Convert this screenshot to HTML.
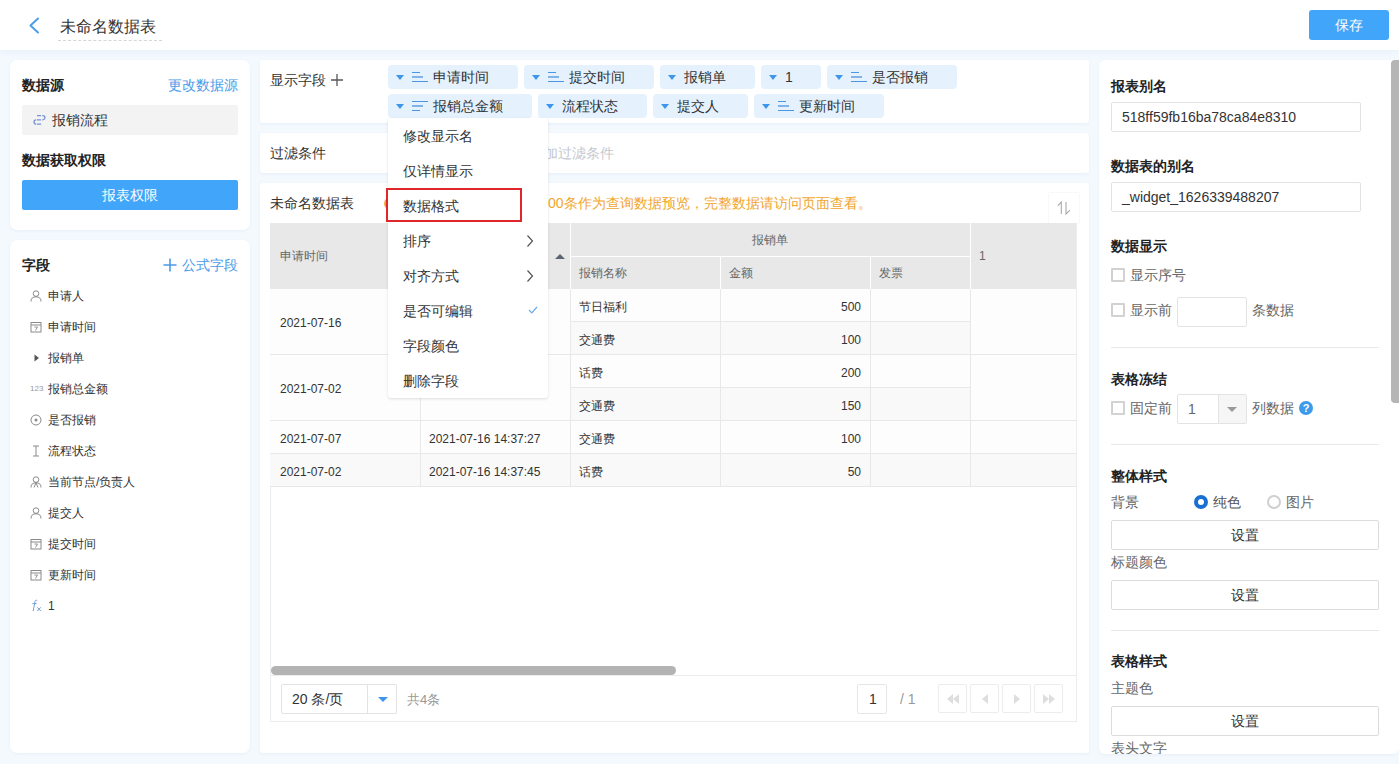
<!DOCTYPE html><html><head><meta charset="utf-8"><style>
*{box-sizing:border-box;margin:0;padding:0}
html,body{width:1399px;height:764px;overflow:hidden}
body{font-family:"Liberation Sans",sans-serif;background:#f4f9fe;color:#333;font-size:14px;position:relative}
.abs{position:absolute}
.card{position:absolute;background:#fff;box-shadow:0 1px 3px rgba(205,220,238,.35)}
.t{position:absolute;white-space:nowrap;line-height:1}
.b{font-weight:bold;color:#222}
.blue{color:#4a9be8}
.tag{position:absolute;height:24px;background:#e5f2fe;border-radius:4px}
.tri{position:absolute;width:0;height:0;border-left:4px solid transparent;border-right:4px solid transparent;border-top:5px solid #3d96ec}
.cell{position:absolute;font-size:12px;line-height:1;white-space:nowrap;color:#333}
.mi{position:absolute;left:403px;font-size:14px;color:#333;line-height:1;white-space:nowrap}
.inp{position:absolute;border:1px solid #e3e3e3;border-radius:2px;background:#fff}
.cb{position:absolute;left:1111px;width:14px;height:14px;border:2px solid #d2d2d2;border-radius:1px;background:#fff}
.btn{position:absolute;left:1111px;width:268px;height:30px;border:1px solid #dcdcdc;border-radius:2px;background:#fff;text-align:center;line-height:28px;font-size:14px;color:#333}
.fi{position:absolute;left:48px;font-size:12px;line-height:1;color:#333;white-space:nowrap}
.pb{position:absolute;top:684px;width:29px;height:29px;border:1px solid #ececec;border-radius:2px;background:#fff}
</style></head><body>
<div class="abs" style="left:0;top:0;width:1399px;height:50px;background:#fff;box-shadow:0 2px 6px rgba(210,225,242,.35)"></div>
<svg class="abs" style="left:26px;top:15px" width="16" height="20" viewBox="0 0 16 20"><path d="M12 3.5 L4.5 10.5 L12 17.5" fill="none" stroke="#4a9ee8" stroke-width="2" stroke-linecap="round" stroke-linejoin="round"/></svg>
<div class="t" style="left:60px;top:19px;font-size:16px;color:#333">未命名数据表</div>
<div class="abs" style="left:58px;top:40px;width:104px;border-top:1px dashed #d6d6d6"></div>
<div class="abs" style="left:1309px;top:10px;width:80px;height:30px;background:#41a6fa;border-radius:3px;color:#fff;font-size:14px;text-align:center;line-height:30px">保存</div>
<div class="card" style="left:10px;top:60px;width:240px;height:170px;border-radius:7px"></div>
<div class="t b" style="left:22px;top:78px;font-size:14px">数据源</div>
<div class="t blue" style="left:168px;top:78px;font-size:14px">更改数据源</div>
<div class="abs" style="left:22px;top:105px;width:216px;height:30px;background:#f3f3f3;border-radius:2px"></div>
<svg class="abs" style="left:33px;top:113px" width="13" height="13" viewBox="0 0 13 13"><path d="M4 2.5H8M4 6.8H8M4 11.2H8M9.2 2.5H9.8A2.15 2.15 0 0 1 9.8 6.8H9.2M3.2 6.8A2.2 2.2 0 0 0 3.2 11.2" fill="none" stroke="#7393d6" stroke-width="1.25"/></svg>
<div class="t" style="left:52px;top:113px;font-size:14px;color:#333">报销流程</div>
<div class="t b" style="left:22px;top:153px;font-size:14px">数据获取权限</div>
<div class="abs" style="left:22px;top:180px;width:216px;height:30px;background:#41a6fa;border-radius:2px;color:#fff;text-align:center;line-height:30px;font-size:14px">报表权限</div>
<div class="card" style="left:10px;top:240px;width:240px;height:513px;border-radius:7px"></div>
<div class="t b" style="left:22px;top:258px;font-size:14px">字段</div>
<svg class="abs" style="left:163px;top:258px" width="14" height="14" viewBox="0 0 14 14"><path d="M7 0.5V13.5M0.5 7H13.5" stroke="#4a9be8" stroke-width="1.6"/></svg>
<div class="t blue" style="left:182px;top:258px;font-size:14px">公式字段</div>
<div class="fi" style="top:290px">申请人</div>
<svg class="abs" style="left:30px;top:290px" width="12" height="12" viewBox="0 0 12 12"><circle cx="6" cy="3.6" r="2.8" fill="none" stroke="#8a8a8a" stroke-width="1"/><path d="M1 11.5 C1 8 3 6.8 6 6.8 C9 6.8 11 8 11 11.5" fill="none" stroke="#8a8a8a" stroke-width="1"/></svg>
<div class="fi" style="top:321px">申请时间</div>
<svg class="abs" style="left:30px;top:321px" width="12" height="12" viewBox="0 0 12 12"><rect x="1" y="1.5" width="10" height="9.5" fill="none" stroke="#8a8a8a" stroke-width="1"/><path d="M1 4H11" stroke="#8a8a8a" stroke-width="1"/><path d="M4.5 6H7.5L5.5 9.5" fill="none" stroke="#8a8a8a" stroke-width="0.9"/></svg>
<div class="fi" style="top:352px">报销单</div>
<svg class="abs" style="left:34px;top:354px" width="6" height="8" viewBox="0 0 6 8"><path d="M0.5 0.5L5 4L0.5 7.5Z" fill="#555"/></svg>
<div class="fi" style="top:383px">报销总金额</div>
<div class="t" style="left:30px;top:385px;font-size:8px;color:#999;letter-spacing:0">123</div>
<div class="fi" style="top:414px">是否报销</div>
<svg class="abs" style="left:30px;top:414px" width="12" height="12" viewBox="0 0 12 12"><circle cx="6" cy="6" r="5" fill="none" stroke="#8a8a8a" stroke-width="1"/><circle cx="6" cy="6" r="1.5" fill="#8a8a8a"/></svg>
<div class="fi" style="top:445px">流程状态</div>
<svg class="abs" style="left:31px;top:445px" width="10" height="12" viewBox="0 0 10 12"><path d="M2 1H8M5 1V11M2 11H8" fill="none" stroke="#8a8a8a" stroke-width="1"/></svg>
<div class="fi" style="top:476px">当前节点/负责人</div>
<svg class="abs" style="left:30px;top:476px" width="12" height="12" viewBox="0 0 12 12"><circle cx="6" cy="3.6" r="2.8" fill="none" stroke="#8a8a8a" stroke-width="1"/><path d="M1 11.5 C1 8 3 6.8 6 6.8 C9 6.8 11 8 11 11.5 M6 6.8 L4 11.5 M6 6.8 L8 11.5" fill="none" stroke="#8a8a8a" stroke-width="1"/></svg>
<div class="fi" style="top:507px">提交人</div>
<svg class="abs" style="left:30px;top:507px" width="12" height="12" viewBox="0 0 12 12"><circle cx="6" cy="3.6" r="2.8" fill="none" stroke="#8a8a8a" stroke-width="1"/><path d="M1 11.5 C1 8 3 6.8 6 6.8 C9 6.8 11 8 11 11.5" fill="none" stroke="#8a8a8a" stroke-width="1"/></svg>
<div class="fi" style="top:538px">提交时间</div>
<svg class="abs" style="left:30px;top:538px" width="12" height="12" viewBox="0 0 12 12"><rect x="1" y="1.5" width="10" height="9.5" fill="none" stroke="#8a8a8a" stroke-width="1"/><path d="M1 4H11" stroke="#8a8a8a" stroke-width="1"/><path d="M4.5 6H7.5L5.5 9.5" fill="none" stroke="#8a8a8a" stroke-width="0.9"/></svg>
<div class="fi" style="top:569px">更新时间</div>
<svg class="abs" style="left:30px;top:569px" width="12" height="12" viewBox="0 0 12 12"><rect x="1" y="1.5" width="10" height="9.5" fill="none" stroke="#8a8a8a" stroke-width="1"/><path d="M1 4H11" stroke="#8a8a8a" stroke-width="1"/><path d="M4.5 6H7.5L5.5 9.5" fill="none" stroke="#8a8a8a" stroke-width="0.9"/></svg>
<div class="fi" style="top:600px">1</div>
<svg class="abs" style="left:31px;top:599px" width="11" height="13" viewBox="0 0 11 13"><path d="M6.3 1.6 C5.6 0.9 4.4 1 4 2.4 L2.2 12 M1.4 4.6 H5.6" fill="none" stroke="#6d9fdc" stroke-width="1"/><path d="M6.3 8.3 L9.8 12 M9.8 8.3 L6.3 12" fill="none" stroke="#6d9fdc" stroke-width="1"/></svg>
<div class="card" style="left:260px;top:60px;width:829px;height:63px;border-radius:3px"></div>
<div class="t" style="left:270px;top:73px;font-size:14px;color:#333">显示字段</div>
<svg class="abs" style="left:331px;top:74px" width="12" height="12" viewBox="0 0 12 12"><path d="M6 0V12M0 6H12" stroke="#555" stroke-width="1.3"/></svg>
<div class="tag" style="left:388px;top:65px;width:130px"></div>
<div class="tri" style="left:396px;top:75px"></div>
<div class="abs" style="left:412px;top:72px;width:8px;height:1px;background:#4c97e4"></div>
<div class="abs" style="left:412px;top:76px;width:11px;height:2px;background:#7fb3ea"></div>
<div class="abs" style="left:412px;top:81px;width:16px;height:1px;background:#4c97e4"></div>
<div class="t" style="left:433px;top:70px;font-size:14px;color:#333">申请时间</div>
<div class="tag" style="left:524px;top:65px;width:130px"></div>
<div class="tri" style="left:532px;top:75px"></div>
<div class="abs" style="left:548px;top:72px;width:8px;height:1px;background:#4c97e4"></div>
<div class="abs" style="left:548px;top:76px;width:11px;height:2px;background:#7fb3ea"></div>
<div class="abs" style="left:548px;top:81px;width:16px;height:1px;background:#4c97e4"></div>
<div class="t" style="left:569px;top:70px;font-size:14px;color:#333">提交时间</div>
<div class="tag" style="left:660px;top:65px;width:95px"></div>
<div class="tri" style="left:668px;top:75px"></div>
<div class="t" style="left:684px;top:70px;font-size:14px;color:#333">报销单</div>
<div class="tag" style="left:761px;top:65px;width:60px"></div>
<div class="tri" style="left:769px;top:75px"></div>
<div class="t" style="left:785px;top:70px;font-size:14px;color:#333">1</div>
<div class="tag" style="left:827px;top:65px;width:130px"></div>
<div class="tri" style="left:835px;top:75px"></div>
<div class="abs" style="left:851px;top:72px;width:8px;height:1px;background:#4c97e4"></div>
<div class="abs" style="left:851px;top:76px;width:11px;height:2px;background:#7fb3ea"></div>
<div class="abs" style="left:851px;top:81px;width:16px;height:1px;background:#4c97e4"></div>
<div class="t" style="left:872px;top:70px;font-size:14px;color:#333">是否报销</div>
<div class="tag" style="left:388px;top:94px;width:144px"></div>
<div class="tri" style="left:396px;top:104px"></div>
<div class="abs" style="left:412px;top:101px;width:16px;height:1px;background:#4c97e4"></div>
<div class="abs" style="left:412px;top:105px;width:11px;height:2px;background:#7fb3ea"></div>
<div class="abs" style="left:412px;top:110px;width:8px;height:1px;background:#4c97e4"></div>
<div class="t" style="left:433px;top:99px;font-size:14px;color:#333">报销总金额</div>
<div class="tag" style="left:538px;top:94px;width:109px"></div>
<div class="tri" style="left:546px;top:104px"></div>
<div class="t" style="left:562px;top:99px;font-size:14px;color:#333">流程状态</div>
<div class="tag" style="left:653px;top:94px;width:95px"></div>
<div class="tri" style="left:661px;top:104px"></div>
<div class="t" style="left:677px;top:99px;font-size:14px;color:#333">提交人</div>
<div class="tag" style="left:754px;top:94px;width:130px"></div>
<div class="tri" style="left:762px;top:104px"></div>
<div class="abs" style="left:778px;top:101px;width:8px;height:1px;background:#4c97e4"></div>
<div class="abs" style="left:778px;top:105px;width:11px;height:2px;background:#7fb3ea"></div>
<div class="abs" style="left:778px;top:110px;width:16px;height:1px;background:#4c97e4"></div>
<div class="t" style="left:799px;top:99px;font-size:14px;color:#333">更新时间</div>
<div class="card" style="left:260px;top:133px;width:829px;height:40px;border-radius:3px"></div>
<div class="t" style="left:270px;top:146px;font-size:14px;color:#333">过滤条件</div>
<div class="t" style="left:530px;top:146px;font-size:14px;color:#c4c8cf">添加过滤条件</div>
<div class="card" style="left:260px;top:183px;width:829px;height:570px;border-radius:3px"></div>
<div class="t" style="left:270px;top:196px;font-size:14px;color:#333">未命名数据表</div>
<div class="abs" style="left:384px;top:197px;width:13px;height:13px;border-radius:50%;background:#f2a52e"></div>
<div class="t" style="left:548px;top:196px;font-size:14px;color:#f2a52e">00条作为查询数据预览，完整数据请访问页面查看。</div>
<div class="abs" style="left:1049px;top:193px;width:30px;height:30px;background:#fff;box-shadow:0 0 2px rgba(0,0,0,.09);border-radius:0"></div>
<svg class="abs" style="left:1056px;top:201px" width="16" height="14" viewBox="0 0 16 14"><path d="M5.3 13V1L1.8 4.6M10 1V13L14 9.2" fill="none" stroke="#aaa" stroke-width="1.1"/></svg>
<div class="abs" style="left:270px;top:223px;width:807px;height:499px;border:1px solid #ececec;border-top:none"></div>
<div class="abs" style="left:270px;top:223px;width:806px;height:66px;background:#e8e8e8"></div>
<div class="abs" style="left:420px;top:223px;width:1px;height:66px;background:#fff"></div>
<div class="abs" style="left:570px;top:223px;width:1px;height:66px;background:#fff"></div>
<div class="abs" style="left:970px;top:223px;width:1px;height:66px;background:#fff"></div>
<div class="abs" style="left:570px;top:256px;width:400px;height:1px;background:#fff"></div>
<div class="abs" style="left:720px;top:256px;width:1px;height:33px;background:#fff"></div>
<div class="abs" style="left:870px;top:256px;width:1px;height:33px;background:#fff"></div>
<div class="cell" style="left:280px;top:250px;color:#666">申请时间</div>
<div class="cell" style="left:752px;top:234px;color:#666">报销单</div>
<div class="cell" style="left:579px;top:267px;color:#666">报销名称</div>
<div class="cell" style="left:729px;top:267px;color:#666">金额</div>
<div class="cell" style="left:879px;top:267px;color:#666">发票</div>
<div class="cell" style="left:979px;top:250px;color:#666">1</div>
<div class="abs" style="left:555px;top:254px;width:0;height:0;border-left:5px solid transparent;border-right:5px solid transparent;border-bottom:5px solid #5b6470"></div>
<div class="abs" style="left:570px;top:289px;width:400px;height:33px;background:#fdfdfd"></div>
<div class="abs" style="left:570px;top:322px;width:400px;height:33px;background:#f9f9f9"></div>
<div class="abs" style="left:570px;top:355px;width:400px;height:33px;background:#fdfdfd"></div>
<div class="abs" style="left:570px;top:388px;width:400px;height:33px;background:#f9f9f9"></div>
<div class="abs" style="left:570px;top:421px;width:400px;height:33px;background:#fdfdfd"></div>
<div class="abs" style="left:570px;top:454px;width:400px;height:33px;background:#f9f9f9"></div>
<div class="abs" style="left:270px;top:289px;width:300px;height:66px;background:#fdfdfd"></div>
<div class="abs" style="left:970px;top:289px;width:106px;height:66px;background:#fdfdfd"></div>
<div class="abs" style="left:270px;top:355px;width:300px;height:66px;background:#fdfdfd"></div>
<div class="abs" style="left:970px;top:355px;width:106px;height:66px;background:#fdfdfd"></div>
<div class="abs" style="left:270px;top:421px;width:300px;height:33px;background:#fdfdfd"></div>
<div class="abs" style="left:970px;top:421px;width:106px;height:33px;background:#fdfdfd"></div>
<div class="abs" style="left:270px;top:454px;width:300px;height:33px;background:#f9f9f9"></div>
<div class="abs" style="left:970px;top:454px;width:106px;height:33px;background:#f9f9f9"></div>
<div class="abs" style="left:570px;top:321px;width:400px;height:1px;background:#e8e8e8"></div>
<div class="abs" style="left:570px;top:387px;width:400px;height:1px;background:#e8e8e8"></div>
<div class="abs" style="left:270px;top:354px;width:806px;height:1px;background:#e8e8e8"></div>
<div class="abs" style="left:270px;top:420px;width:806px;height:1px;background:#e8e8e8"></div>
<div class="abs" style="left:270px;top:453px;width:806px;height:1px;background:#e8e8e8"></div>
<div class="abs" style="left:270px;top:486px;width:806px;height:1px;background:#e8e8e8"></div>
<div class="abs" style="left:420px;top:289px;width:1px;height:198px;background:#e8e8e8"></div>
<div class="abs" style="left:570px;top:289px;width:1px;height:198px;background:#e8e8e8"></div>
<div class="abs" style="left:720px;top:289px;width:1px;height:198px;background:#e8e8e8"></div>
<div class="abs" style="left:870px;top:289px;width:1px;height:198px;background:#e8e8e8"></div>
<div class="abs" style="left:970px;top:289px;width:1px;height:198px;background:#e8e8e8"></div>
<div class="cell" style="left:280px;top:317px">2021-07-16</div>
<div class="cell" style="left:280px;top:383px">2021-07-02</div>
<div class="cell" style="left:280px;top:433px">2021-07-07</div>
<div class="cell" style="left:280px;top:466px">2021-07-02</div>
<div class="cell" style="left:429px;top:433px">2021-07-16 14:37:27</div>
<div class="cell" style="left:429px;top:466px">2021-07-16 14:37:45</div>
<div class="cell" style="left:579px;top:301px">节日福利</div>
<div class="cell" style="left:579px;top:334px">交通费</div>
<div class="cell" style="left:579px;top:367px">话费</div>
<div class="cell" style="left:579px;top:400px">交通费</div>
<div class="cell" style="left:579px;top:433px">交通费</div>
<div class="cell" style="left:579px;top:466px">话费</div>
<div class="cell" style="left:760px;width:101px;text-align:right;top:301px">500</div>
<div class="cell" style="left:760px;width:101px;text-align:right;top:334px">100</div>
<div class="cell" style="left:760px;width:101px;text-align:right;top:367px">200</div>
<div class="cell" style="left:760px;width:101px;text-align:right;top:400px">150</div>
<div class="cell" style="left:760px;width:101px;text-align:right;top:433px">100</div>
<div class="cell" style="left:760px;width:101px;text-align:right;top:466px">50</div>
<div class="abs" style="left:271px;top:666px;width:405px;height:9px;background:#b3b3b3;border-radius:5px"></div>
<div class="abs" style="left:270px;top:675px;width:807px;height:1px;background:#ececec"></div>
<div class="abs" style="left:281px;top:684px;width:116px;height:30px;border:1px solid #e3e3e3;border-radius:2px;background:#fff"></div>
<div class="abs" style="left:367px;top:685px;width:1px;height:28px;background:#e3e3e3"></div>
<div class="t" style="left:292px;top:692px;font-size:14px;color:#333">20 条/页</div>
<div class="abs" style="left:378px;top:697px;width:0;height:0;border-left:5px solid transparent;border-right:5px solid transparent;border-top:5px solid #3d96ec"></div>
<div class="t" style="left:407px;top:693px;font-size:13px;color:#999">共4条</div>
<div class="abs" style="left:857px;top:684px;width:30px;height:30px;border:1px solid #e6e6e6;border-radius:2px;background:#fff"></div>
<div class="t" style="left:869px;top:692px;font-size:14px;color:#333">1</div>
<div class="t" style="left:900px;top:692px;font-size:14px;color:#999">/&nbsp;1</div>
<div class="pb" style="left:938px"></div>
<div class="pb" style="left:970px"></div>
<div class="pb" style="left:1002px"></div>
<div class="pb" style="left:1034px"></div>
<svg class="abs" style="left:946px;top:692px" width="14" height="14" viewBox="0 0 14 14"><path d="M7 2L1 7L7 12Z M13 2L7 7L13 12Z" fill="#dedede"/></svg>
<svg class="abs" style="left:980px;top:692px" width="10" height="14" viewBox="0 0 10 14"><path d="M8 2L2 7L8 12Z" fill="#dedede"/></svg>
<svg class="abs" style="left:1012px;top:692px" width="10" height="14" viewBox="0 0 10 14"><path d="M2 2L8 7L2 12Z" fill="#dedede"/></svg>
<svg class="abs" style="left:1042px;top:692px" width="14" height="14" viewBox="0 0 14 14"><path d="M1 2L7 7L1 12Z M7 2L13 7L7 12Z" fill="#dedede"/></svg>
<div class="abs" style="left:388px;top:118px;width:160px;height:280px;background:#fff;border-radius:3px;box-shadow:0 1px 3px rgba(0,0,0,.13)"></div>
<div class="mi" style="top:129px">修改显示名</div>
<div class="mi" style="top:164px">仅详情显示</div>
<div class="mi" style="top:199px">数据格式</div>
<div class="mi" style="top:234px">排序</div>
<div class="mi" style="top:269px">对齐方式</div>
<div class="mi" style="top:304px">是否可编辑</div>
<div class="mi" style="top:339px">字段颜色</div>
<div class="mi" style="top:374px">删除字段</div>
<svg class="abs" style="left:526px;top:234px" width="8" height="14" viewBox="0 0 8 14"><path d="M1.5 1.5L6.5 7L1.5 12.5" fill="none" stroke="#555" stroke-width="1.2"/></svg>
<svg class="abs" style="left:526px;top:269px" width="8" height="14" viewBox="0 0 8 14"><path d="M1.5 1.5L6.5 7L1.5 12.5" fill="none" stroke="#555" stroke-width="1.2"/></svg>
<svg class="abs" style="left:528px;top:306px" width="10" height="8" viewBox="0 0 10 8"><path d="M1 4L3.8 6.8L9 1" fill="none" stroke="#6aa9ea" stroke-width="1.2"/></svg>
<div class="abs" style="left:386px;top:188px;width:136px;height:34px;border:2px solid #e0262a"></div>
<div class="card" style="left:1099px;top:60px;width:300px;height:694px;border-radius:6px"></div>
<div class="abs" style="left:1391px;top:60px;width:8px;height:343px;background:#b5b5b5;border-radius:4px 0 0 4px"></div>
<div class="t b" style="left:1111px;top:79px;font-size:14px">报表别名</div>
<div class="inp" style="left:1111px;top:102px;width:250px;height:30px"></div>
<div class="t" style="left:1122px;top:110px;font-size:14px;color:#333">518ff59fb16ba78ca84e8310</div>
<div class="t b" style="left:1111px;top:159px;font-size:14px">数据表的别名</div>
<div class="inp" style="left:1111px;top:182px;width:250px;height:30px"></div>
<div class="t" style="left:1122px;top:190px;font-size:14px;color:#333">_widget_1626339488207</div>
<div class="t b" style="left:1111px;top:239px;font-size:14px">数据显示</div>
<div class="cb" style="top:268px"></div>
<div class="t" style="left:1130px;top:268px;font-size:14px;color:#666">显示序号</div>
<div class="cb" style="top:303px"></div>
<div class="t" style="left:1130px;top:303px;font-size:14px;color:#666">显示前</div>
<div class="inp" style="left:1177px;top:297px;width:70px;height:30px"></div>
<div class="t" style="left:1252px;top:303px;font-size:14px;color:#666">条数据</div>
<div class="abs" style="left:1111px;top:347px;width:268px;height:1px;background:#e8e8e8"></div>
<div class="t b" style="left:1111px;top:372px;font-size:14px">表格冻结</div>
<div class="cb" style="top:401px"></div>
<div class="t" style="left:1130px;top:401px;font-size:14px;color:#666">固定前</div>
<div class="inp" style="left:1177px;top:394px;width:70px;height:30px"></div>
<div class="abs" style="left:1218px;top:395px;width:28px;height:28px;background:#f6f6f6;border-left:1px solid #e3e3e3"></div>
<div class="t" style="left:1188px;top:402px;font-size:14px;color:#666">1</div>
<div class="abs" style="left:1227px;top:407px;width:0;height:0;border-left:5px solid transparent;border-right:5px solid transparent;border-top:5px solid #999"></div>
<div class="t" style="left:1252px;top:401px;font-size:14px;color:#666">列数据</div>
<div class="abs" style="left:1299px;top:401px;width:14px;height:14px;border-radius:50%;background:#3d9bec;color:#fff;font-size:11px;font-weight:bold;text-align:center;line-height:14px">?</div>
<div class="abs" style="left:1111px;top:444px;width:268px;height:1px;background:#e8e8e8"></div>
<div class="t b" style="left:1111px;top:469px;font-size:14px">整体样式</div>
<div class="t" style="left:1111px;top:495px;font-size:14px;color:#666">背景</div>
<div class="abs" style="left:1194px;top:495px;width:14px;height:14px;border-radius:50%;border:4px solid #1a6fd3;background:#fff"></div>
<div class="t" style="left:1213px;top:495px;font-size:14px;color:#555">纯色</div>
<div class="abs" style="left:1267px;top:495px;width:14px;height:14px;border-radius:50%;border:2px solid #cfcfcf;background:#fff"></div>
<div class="t" style="left:1286px;top:495px;font-size:14px;color:#666">图片</div>
<div class="btn" style="top:520px">设置</div>
<div class="t" style="left:1111px;top:555px;font-size:14px;color:#666">标题颜色</div>
<div class="btn" style="top:580px">设置</div>
<div class="abs" style="left:1111px;top:630px;width:268px;height:1px;background:#e8e8e8"></div>
<div class="t b" style="left:1111px;top:654px;font-size:14px">表格样式</div>
<div class="t" style="left:1111px;top:681px;font-size:14px;color:#666">主题色</div>
<div class="btn" style="top:706px">设置</div>
<div class="t" style="left:1111px;top:741px;font-size:14px;color:#666;height:13px;overflow:hidden">表头文字</div>
</body></html>
